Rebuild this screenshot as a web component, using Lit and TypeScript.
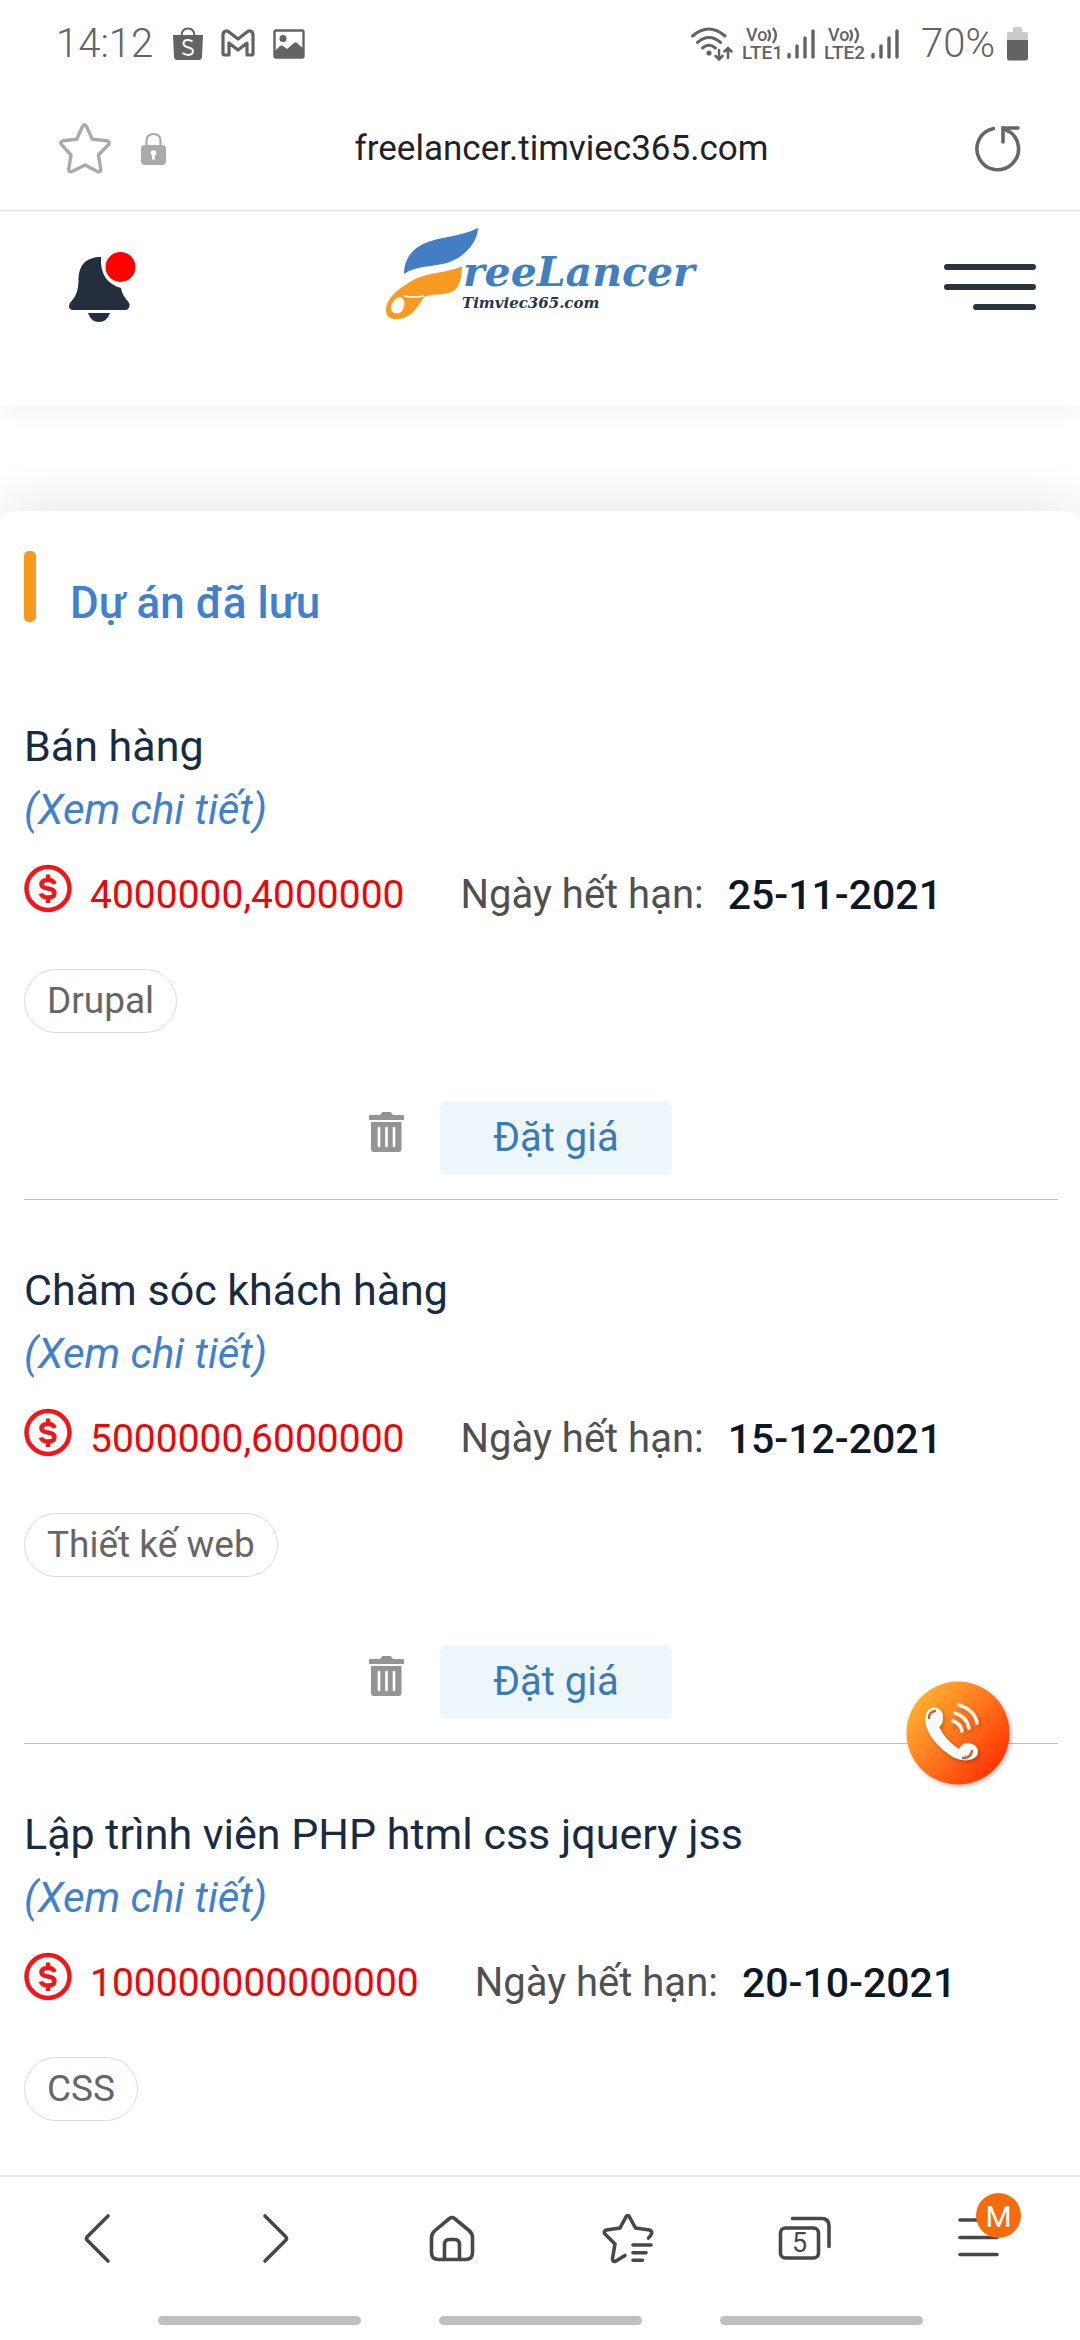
import { LitElement, html, css, svg, nothing } from "lit";
import { customElement, property } from "lit/decorators.js";

interface Project {
  title: string;
  price: string;
  deadline: string;
  skill: string;
  biddable: boolean;
}

const PROJECTS: Project[] = [
  { title: "Bán hàng", price: "4000000,4000000", deadline: "25-11-2021", skill: "Drupal", biddable: true },
  { title: "Chăm sóc khách hàng", price: "5000000,6000000", deadline: "15-12-2021", skill: "Thiết kế web", biddable: true },
  { title: "Lập trình viên PHP html css jquery jss", price: "100000000000000", deadline: "20-10-2021", skill: "CSS", biddable: false },
];

const base = css`
  :host { display: block; font-family: Roboto, "Noto Sans", sans-serif; }
  * { box-sizing: border-box; }
  svg { display: block; flex: none; overflow: visible; }
  button { margin: 0; padding: 0; border: 0; background: none; font: inherit; color: inherit; cursor: pointer; }
  a { text-decoration: none; }
`;

const lteBadge = (slot: number) => svg`
  <text x="4" y="14" font-size="18" font-weight="500">Vo</text>
  <path d="M26 3q4 5 0 11M31 1q6 7 0 15" fill="none" stroke="#636363" stroke-width="2.4"/>
  <text x="0" y="32" font-size="19" font-weight="500">LTE${slot}</text>`;

@customElement("status-bar")
export class StatusBar extends LitElement {
  static styles = [base, css`
    .bar { display: flex; align-items: center; height: 88px; padding: 0 51px 0 56px; color: #636363; }
    .time, .level { font-size: 40px; line-height: 48px; font-weight: 300; }
    .group { display: flex; align-items: center; }
    .left { gap: 18px; }
    .right { margin-left: auto; }
    .time { margin-right: 2px; }
    .lte { margin-left: 9px; fill: #636363; font-family: Roboto, sans-serif; }
    .signal { margin-left: 7px; }
    .level { margin: 0 12px 0 22px; }
  `];

  private signal() {
    return html`<svg class="signal" width="28" height="32" viewBox="0 0 28 32" fill="none" stroke="#636363" stroke-width="3.4" stroke-linecap="round">
      <path d="M2 26.5v2.5M10 18v11M18 10v19M26 3v26"/></svg>`;
  }

  render() {
    return html`<div class="bar">
      <div class="group left">
        <span class="time">14:12</span>
        <svg width="30" height="34" viewBox="0 0 30 34">
          <path d="M8.500 9C8.500 4 11 1.500 15 1.500s6.500 2.500 6.500 7.500" fill="none" stroke="#636363" stroke-width="2"/>
          <path d="M0 8h30l-1 22q-.3 3-3 3H4q-2.700 0-3-3Z" fill="#636363"/>
          <path d="M19.500 14.500C16 12 10.500 12.500 10.500 16.500c0 5 9.500 3 9.500 7.500 0 4.500-6 5-10.500 2" fill="none" stroke="#fff" stroke-width="2"/>
        </svg>
        <svg width="34" height="30" viewBox="0 0 34 30">
          <path d="M2 24V6C2 2 5.500 1 8 3l9 7 9-7c2.500-2 6-1 6 3v18.500q0 1.500-1.500 1.500H26V14l-9 7-9-7v12H3.500Q2 26 2 24Z" fill="none" stroke="#636363" stroke-width="3.200" stroke-linejoin="round"/>
        </svg>
        <svg width="32" height="30" viewBox="0 0 32 30">
          <rect x="1.500" y="1.500" width="29" height="27" rx="1.500" fill="none" stroke="#636363" stroke-width="2.400"/>
          <circle cx="10" cy="9.500" r="3.500" fill="#636363"/>
          <path d="M2 22l5-5q1.500-1 3 0l4 3 7-6q1.500-1.500 3 0l7 6v8H2Z" fill="#636363"/>
        </svg>
      </div>
      <div class="group right">
        <svg width="42" height="34" viewBox="0 0 42 34" fill="none" stroke="#636363" stroke-width="3" stroke-linecap="round">
          <path d="M1.500 9Q18-5 34 9M6.500 15.500q11.500-10 23 0M11.500 21q6.500-5.500 13 0"/>
          <circle cx="18" cy="26" r="2.600" fill="#636363" stroke="none"/>
          <path d="M28 23v9M24.500 29l3.500 3.500 3.500-3.500M37 31v-9M33.500 24.500 37 21l3.500 3.500" stroke-width="2.500"/>
        </svg>
        <svg class="lte" width="38" height="34" viewBox="0 0 38 34">${lteBadge(1)}</svg>
        ${this.signal()}
        <svg class="lte" width="40" height="34" viewBox="0 0 40 34">${lteBadge(2)}</svg>
        ${this.signal()}
        <span class="level">70%</span>
        <svg width="22" height="34" viewBox="0 0 22 34">
          <path d="M6 5V2q0-2 2-2h5q2 0 2 2v3h4q2 0 2 2v8H0V7q0-2 2-2Z" fill="#cbcbcb"/>
          <path d="M0 13h21v18q0 2.500-2 2.500H2Q0 33.500 0 31Z" fill="#636363"/>
        </svg>
      </div>
    </div>`;
  }
}

@customElement("address-bar")
export class AddressBar extends LitElement {
  static styles = [base, css`
    .bar { display: grid; grid-template-columns: 1fr auto 1fr; align-items: center; height: 123px; padding: 0 58px 0 57px; border-bottom: 1px solid #e0e0e0; }
    .left { display: flex; align-items: center; gap: 28px; }
    .url { margin-left: 44px; font-size: 35px; line-height: 48px; color: #222; }
    .reload { justify-self: end; }
  `];

  render() {
    return html`<div class="bar">
      <div class="left">
        <button aria-label="Bookmark">
          <svg width="56" height="56" viewBox="0 0 56 56" fill="none" stroke="#aaa" stroke-width="3.400" stroke-linejoin="round">
            <path d="M25.500 5.500q2-3.500 4 0l5.800 12.700 14.700 1.600q3.500 1 1.500 3.800L41.500 34l2.300 14.500q0 3-3.300 2L28 44l-13 6.500q-3 1-3.300-2L14 34 4.500 23.600Q2.500 20.800 6 19.800l13.700-1.600Z"/>
          </svg>
        </button>
        <svg width="25" height="34" viewBox="0 0 25 34">
          <path d="M5.500 14V9.500C5.500 4.500 8 2 12.500 2s7 2.500 7 7.500V14" fill="none" stroke="#aaa" stroke-width="2.200"/>
          <rect x="0" y="13" width="25" height="20" rx="4" fill="#aaa"/>
          <circle cx="12.500" cy="21" r="2.800" fill="#fff"/><path d="M11 21h3v6.500h-3Z" fill="#fff"/>
        </svg>
      </div>
      <span class="url">freelancer.timviec365.com</span>
      <button class="reload" aria-label="Reload">
        <svg width="50" height="50" viewBox="0 0 50 50" fill="none" stroke="#666" stroke-width="3.600" stroke-linecap="round" stroke-linejoin="round">
          <path d="M21.500 4.500A20.800 20.800 0 1 0 35.500 6.500"/><path d="M46 4H31v14"/><path d="M31 4l5 3"/>
        </svg>
      </button>
    </div>`;
  }
}

@customElement("site-header")
export class SiteHeader extends LitElement {
  static styles = [base, css`
    :host { position: relative; z-index: 1; }
    .header { display: grid; grid-template-columns: 1fr auto 1fr; align-items: start; padding: 17px 44px 84px 69px; background: #fff; box-shadow: 0 4px 28px rgba(0, 0, 0, 0.06); clip-path: inset(0 0 -60px 0); }
    .bell { justify-self: start; padding-top: 24px; }
    .logo { margin-right: 22px; }
    .menu { justify-self: end; padding-top: 32px; }
  `];

  render() {
    return html`<header class="header">
      <button class="bell" aria-label="Thông báo">
        <svg width="68" height="70" viewBox="0 0 68 70">
          <path d="M0 54q0-3 3-5.500Q9 42 9.500 30C9 12 18 5 32 5c-1 17 6 27 20 31 1 6 4 10 7.500 14q1.500 2 1 4-1 4-4 4H4q-4 0-4-4Z" fill="#242f3d"/>
          <path d="M19 61h22q-3 9-11 9t-11-9Z" fill="#242f3d"/>
          <circle cx="51.500" cy="15" r="15" fill="#f00"/>
        </svg>
      </button>
      <a class="logo" href="#" aria-label="Freelancer Timviec365.com">
        <svg width="312" height="92" viewBox="0 0 312 92" font-family="'DejaVu Serif', serif" font-style="italic" font-weight="bold">
          <path d="M92 0C72 10 54 8 37 16 24 22 18 34 18 46c15-10 32-6 48-13C81 27 92 12 92 0Z" fill="#427fc2"/>
          <path d="M76 38C60 46 42 43 24 54 8 63 0 73 0 82c0 8 7 10 13 9 12-1 19-12 25-22 12-5 23 0 32-8 5-6 6-15 6-23ZM14 69c5 1 6 8 2 14-3 4-12 3-11-4 1-5 4-9 9-10Z" fill="#f99b22" fill-rule="evenodd"/>
          <path d="M18 68q9 2 20 0" fill="none" stroke="#fff" stroke-width="1.500"/>
          <text x="77" y="58" font-size="41" fill="#427fc2">reeLancer</text>
          <text x="76" y="80" font-size="15" fill="#23364c">Timviec365.com</text>
        </svg>
      </a>
      <button class="menu" aria-label="Menu">
        <svg width="92" height="50" viewBox="0 0 92 50" stroke="#2a3441" stroke-width="6" stroke-linecap="round">
          <path d="M3 7h86M3 27h86M32 47h57"/>
        </svg>
      </button>
    </header>`;
  }
}

@customElement("project-card")
export class ProjectCard extends LitElement {
  @property({ attribute: false }) project!: Project;

  static styles = [base, css`
    .card { display: flex; flex-direction: column; align-items: stretch; padding: 59px 0 24px; }
    .card.ruled { border-bottom: 1px solid #bdbdbd; }
    .title { margin: 0; font-size: 43px; line-height: 63px; font-weight: 400; color: #172b43; }
    .detail { align-self: flex-start; font-size: 42px; line-height: 63px; font-style: italic; color: #4080cd; }
    .meta { display: flex; align-items: flex-start; margin-top: 24px; font-size: 40px; line-height: 48px; color: #505050; }
    .price, .label, .date { padding-top: 6px; }
    .price { margin: 0 56px 0 18px; font-size: 39px; color: #f00505; }
    .date { margin-left: 24px; font-size: 41px; font-weight: 500; color: #0c1824; }
    .skill { align-self: flex-start; margin-top: 50px; padding: 0 22px; border: 1px solid #dcdcdc; border-radius: 32px; font-size: 37px; line-height: 62px; color: #666; }
    .actions { display: flex; justify-content: center; align-items: flex-start; gap: 36px; margin-top: 68px; padding-right: 41px; }
    .trash { padding-top: 11px; }
    .bid { width: 232px; border-radius: 7px; background: #edf6fa; font-size: 40px; line-height: 74px; color: #3b7bb3; }
  `];

  render() {
    const p = this.project;
    return html`<article class="card ${p.biddable ? "ruled" : ""}">
      <h2 class="title">${p.title}</h2>
      <a class="detail" href="#">(Xem chi tiết)</a>
      <div class="meta">
        <svg width="48" height="48" viewBox="0 0 48 48" fill="none" stroke="#f5141a">
          <circle cx="24" cy="23.500" r="21.500" stroke-width="4.500"/>
          <path d="M30.500 19q-1-4-6.500-4-6.500 0-6.500 4.500 0 3 6.500 4t6.500 4.500q0 4.500-6.500 4.500-6 0-7-4M24 9.500v6M24 32.500v5.500" stroke-width="4.500"/>
        </svg>
        <span class="price">${p.price}</span>
        <span class="label">Ngày hết hạn:</span>
        <span class="date">${p.deadline}</span>
      </div>
      <span class="skill">${p.skill}</span>
      ${p.biddable ? html`<div class="actions">
        <button class="trash" aria-label="Xóa">
          <svg width="35" height="41" viewBox="0 0 35 41">
            <path d="M0 4q0-1 1-1h10l1.500-2Q13 0 14 0h7q1 0 1.500 1L24 3h10q1 0 1 1v4H0Z" fill="#949494"/>
            <path d="M2 10h30.500v27q0 3-3 3H5q-3 0-3-3Z" fill="#949494"/>
            <path d="M10 16v18M17.500 16v18M25 16v18" stroke="#fff" stroke-width="2.600" stroke-linecap="round"/>
          </svg>
        </button>
        <button class="bid">Đặt giá</button>
      </div>` : nothing}
    </article>`;
  }
}

@customElement("browser-nav")
export class BrowserNav extends LitElement {
  static styles = [base, css`
    .nav { height: 165px; border-top: 2px solid #e6e6e6; background: #fff; display: flex; flex-direction: column; justify-content: space-between; padding: 13px 10px 15px; }
    .tools { display: grid; grid-template-columns: repeat(6, 1fr); justify-items: center; }
    .tools svg { fill: none; stroke: #474747; stroke-width: 3.6px; stroke-linecap: round; stroke-linejoin: round; }
    .tools .count, .tools .initial { stroke: none; font-family: Roboto, sans-serif; text-anchor: middle; }
    .tools .count { fill: #474747; font-size: 27px; }
    .tools .initial { fill: #fff; font-size: 30px; }
    .tools .badge { fill: #f66c0d; stroke: none; }
    .handles { display: flex; justify-content: center; gap: 78px; }
    .handle { width: 203px; height: 9px; border-radius: 5px; background: #bfbfbf; }
  `];

  render() {
    return html`<nav class="nav">
      <div class="tools">
        <button aria-label="Back"><svg width="72" height="96" viewBox="0 0 72 96"><path d="M46 26 25.500 46.500q-2 2 0 4L46 71"/></svg></button>
        <button aria-label="Forward"><svg width="72" height="96" viewBox="0 0 72 96"><path d="M26 26l20.500 20.500q2 2 0 4L26 71"/></svg></button>
        <button aria-label="Home"><svg width="72" height="96" viewBox="0 0 72 96">
          <path d="M33.500 28.500q2.500-2 5 0L53 40.500q3.500 3 3.500 7v15q0 7-7 7H22.500q-7 0-7-7V47.500q0-4 3.500-7Z"/><path d="M28.500 69V54.500q0-5 5-5h5q5 0 5 5V69"/></svg></button>
        <button aria-label="Bookmarks"><svg width="72" height="96" viewBox="0 0 72 96">
          <path d="M56.500 48l2-2.500q3-4-1-5.500L43.500 38 37.500 27q-1.800-3-3.600 0L28 38l-13.500 2q-4 1.500-1 4.500L23 54l-2.500 14.500q0 4 3.500 2.500l9-5.500"/>
          <path d="M41 55h18M41 62.700h13M41 70.300h9.500"/></svg></button>
        <button aria-label="Tabs"><svg width="72" height="96" viewBox="0 0 72 96">
          <rect x="11.500" y="38" width="38" height="30" rx="5"/><path d="M23.500 28.500h29q7.500 0 7.500 7.500v20.500"/><text class="count" x="30.500" y="62">5</text></svg></button>
        <button aria-label="Menu"><svg width="72" height="96" viewBox="0 0 72 96">
          <path d="M14 30h37M14 47.500h37M14 64.500h37"/><circle class="badge" cx="52.500" cy="25.500" r="22.500"/><text class="initial" x="52.500" y="36.500">M</text></svg></button>
      </div>
      <div class="handles"><span class="handle"></span><span class="handle"></span><span class="handle"></span></div>
    </nav>`;
  }
}

@customElement("app-root")
export class AppRoot extends LitElement {
  static styles = [base, css`
    .screen { display: flex; flex-direction: column; height: 100vh; background: #fff; }
    .viewport { position: relative; flex: 1; min-height: 0; display: flex; flex-direction: column; }
    .content { flex: 1; min-height: 0; display: flex; flex-direction: column; overflow-y: auto; scrollbar-width: none; padding-top: 105px; }
    .panel { flex: 1 0 auto; padding: 40px 22px 0 24px; border-radius: 14px 14px 0 0; background: #fff; box-shadow: 0 0 60px rgba(0, 0, 0, 0.12); }
    .heading { display: flex; align-items: flex-start; gap: 34px; margin-bottom: 16px; }
    .mark { width: 12px; height: 71px; border-radius: 5px; background: #f8981d; }
    .name { margin: 0; padding-top: 15px; font-size: 44px; line-height: 74px; font-weight: 500; color: #4080cd; }
    .call { position: absolute; right: 62px; bottom: 382px; z-index: 2; }
  `];

  render() {
    return html`<div class="screen">
      <status-bar></status-bar>
      <address-bar></address-bar>
      <div class="viewport">
        <site-header></site-header>
        <main class="content">
          <section class="panel">
            <div class="heading"><span class="mark"></span><h1 class="name">Dự án đã lưu</h1></div>
            ${PROJECTS.map((p) => html`<project-card .project=${p}></project-card>`)}
          </section>
        </main>
        <button class="call" aria-label="Gọi điện">
          <svg width="112" height="112" viewBox="0 0 112 112">
            <defs>
              <linearGradient id="warm" x1="0.1" y1="0.15" x2="0.9" y2="0.85">
                <stop offset="0" stop-color="#ffb02f"/><stop offset="0.5" stop-color="#ff741d"/><stop offset="1" stop-color="#ff3300"/>
              </linearGradient>
              <filter id="soft" x="-20%" y="-20%" width="150%" height="150%"><feDropShadow dx="2" dy="2" stdDeviation="2" flood-opacity="0.25"/></filter>
            </defs>
            <circle cx="52" cy="52" r="51.500" fill="url(#warm)" filter="url(#soft)"/>
            <g filter="url(#soft)">
              <path d="M21 31q4-6 10-4 7 3 6 11-1 6-4 8 6 13 20 22 3-6 9-6 9 1 10 8 0 8-10 9-10 2-22-8C26 60 15 44 21 31Z" fill="#f4fdfb"/>
              <path d="M23 37q0-6 6-7M57 77q8 0 9-7" fill="none" stroke="#c9612d" stroke-width="2.400" stroke-linecap="round"/>
              <path d="M53 24q16 5 18 18M49 32q12 4 14 15M47 40q8 3 9 10" fill="none" stroke="#fff1df" stroke-width="3.600" stroke-linecap="round"/>
            </g>
          </svg>
        </button>
      </div>
      <browser-nav></browser-nav>
    </div>`;
  }
}
